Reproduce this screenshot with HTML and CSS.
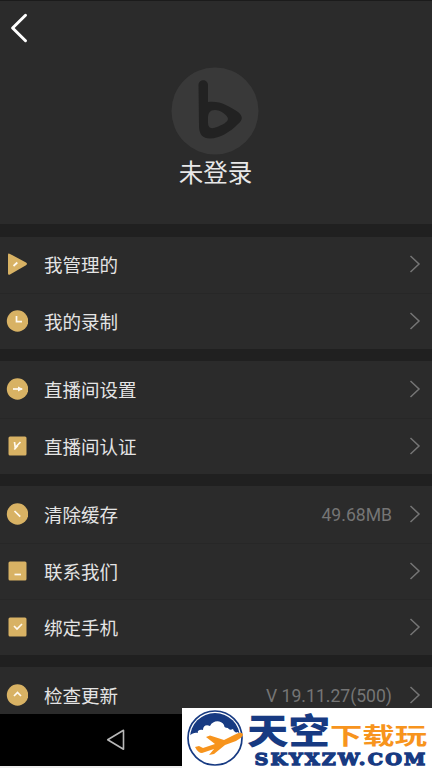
FILE: index.html
```html
<!DOCTYPE html>
<html lang="zh-CN">
<head>
<meta charset="utf-8">
<title>我的</title>
<link rel="stylesheet" href="styles.css">
</head>
<body>
<main class="screen">
  <header class="profile">
    <svg class="back" viewBox="0 0 18 30"><path d="M15.5 2.3 2.6 15 15.5 27.7"/></svg>
    <svg class="avatar" viewBox="0 0 88 88"><circle class="disc" cx="44" cy="44" r="43.5"/><path class="mark" fill-rule="evenodd" d="M27.500 18C27.500 11.500 37 11.500 37 18V35C49 33.500 58 39 67 45C72 49 72 53 67 57C59 65 49 71.500 39 71.500Q28 71.500 28 59ZM37 51V55C37 62 41 62 46 60C51 58 57 55 57 52C57 48 49 43 44 43C39 43 37 46 37 51Z"/></svg>
    <h1 class="name">未登录</h1>
  </header>
  <section class="group">
    <a class="row"><svg class="icon" viewBox="0 0 22 22"><path class="gold" d="M2 1.800Q2-.2 4 .9L20 9.400Q22 10.800 20 12.200L4 21.500Q2 22.400 2 20.400Z"/><path class="line" d="m7.500 13 3.800-3.500"/></svg><span class="label">我管理的</span><svg class="chevron" viewBox="0 0 12 20"><path d="m1.500 2 8.500 8-8.500 8"/></svg></a>
    <a class="row"><svg class="icon" viewBox="0 0 22 22"><circle class="gold" cx="11.500" cy="11" r="10.700"/><path class="line" d="M10.500 6v5.700H16"/></svg><span class="label">我的录制</span><svg class="chevron" viewBox="0 0 12 20"><path d="m1.500 2 8.500 8-8.500 8"/></svg></a>
  </section>
  <section class="group">
    <a class="row"><svg class="icon" viewBox="0 0 22 22"><circle class="gold" cx="11.500" cy="11" r="10.700"/><path class="line" d="M7 11h9"/><path class="fill" d="m12 8.500 5 2.500-5 2.500Z"/></svg><span class="label">直播间设置</span><svg class="chevron" viewBox="0 0 12 20"><path d="m1.500 2 8.500 8-8.500 8"/></svg></a>
    <a class="row"><svg class="icon" viewBox="0 0 22 22"><rect class="gold" x="2.500" y="1.500" width="18" height="19" rx="1.500"/><path class="line" d="m8.500 7 .7 5.500L14.500 7M8.300 14.500l3.500-4"/></svg><span class="label">直播间认证</span><svg class="chevron" viewBox="0 0 12 20"><path d="m1.500 2 8.500 8-8.500 8"/></svg></a>
  </section>
  <section class="group">
    <a class="row"><svg class="icon" viewBox="0 0 22 22"><circle class="gold" cx="11.500" cy="11" r="10.700"/><path class="line" d="m8.500 8 5.700 5.700"/></svg><span class="label">清除缓存</span><span class="value">49.68MB</span><svg class="chevron" viewBox="0 0 12 20"><path d="m1.500 2 8.500 8-8.500 8"/></svg></a>
    <a class="row"><svg class="icon" viewBox="0 0 22 22"><rect class="gold" x="2.500" y="1.500" width="18" height="19" rx="1.500"/><path class="line" d="M8.500 14.500H15"/></svg><span class="label">联系我们</span><svg class="chevron" viewBox="0 0 12 20"><path d="m1.500 2 8.500 8-8.500 8"/></svg></a>
    <a class="row"><svg class="icon" viewBox="0 0 22 22"><rect class="gold" x="2.500" y="1.500" width="18" height="19" rx="1.500"/><path class="line" d="m8 10 3 3 5-5"/></svg><span class="label">绑定手机</span><svg class="chevron" viewBox="0 0 12 20"><path d="m1.500 2 8.500 8-8.500 8"/></svg></a>
  </section>
  <section class="group last">
    <a class="row"><svg class="icon" viewBox="0 0 22 22"><circle class="gold" cx="11.500" cy="11" r="10.700"/><path class="line" d="m8 12 3.500-3.500L15 12"/></svg><span class="label">检查更新</span><span class="value">V 19.11.27(500)</span><svg class="chevron" viewBox="0 0 12 20"><path d="m1.500 2 8.500 8-8.500 8"/></svg></a>
  </section>
  <nav class="navbar"><svg class="nav-back" viewBox="0 0 20 22"><path d="M17.500 1.300v19L1.700 10.800Z"/></svg></nav>
</main>
<svg class="watermark" viewBox="0 0 250 60">
  <clipPath id="globe"><circle cx="33" cy="30" r="25"/></clipPath>
  <circle class="ring" cx="33" cy="30" r="27"/>
  <path class="navy" clip-path="url(#globe)" d="M5 0H61V27C58 27 57 26 56 24C54 25 52 24 51 21C49 22 47 22 46 20C43 20 42 19 42 17C39 12 31 12 28 18C24 16 21 18 21 22C17 21 15 23 16 25C12 24 9 26 6 29Z"/>
  <path class="orange" d="M13 39 17 38 21 40 33 36 24 29 28 27.500 42 32 52 27Q60 23 61 26.500Q61 29 54 33L43 37 32 46 27 47 32 41 20 45Q16 45 13 39Z"/>
  <text class="cn navy" x="65" y="35.500" font-size="35" textLength="83" lengthAdjust="spacingAndGlyphs">天空</text>
  <text class="cn orange thin" x="148" y="35.500" font-size="22.500" textLength="97" lengthAdjust="spacingAndGlyphs">下载玩</text>
  <text class="site" x="72.500" y="57" font-size="17.500" textLength="173" lengthAdjust="spacingAndGlyphs">SKYXZW.COM</text>
</svg>
</body>
</html>
```

FILE: styles.css
```css
* { box-sizing: border-box; }
body { margin: 0; background: #fff; font-family: Roboto, "Noto Sans CJK SC", sans-serif; }
.screen { width: 432px; height: 768px; display: flex; flex-direction: column; background: #202020; overflow: hidden; }
.profile { flex: none; height: 224px; margin-bottom: 12.700px; background: #2b2b2b; border-top: 1px solid #1b1b1b; display: grid; grid-template-rows: 66px 88px 38px; justify-items: center; }
.back { width: 18px; height: 30px; justify-self: start; margin: 12px 0 0 10px; }
.back path { fill: none; stroke: #fff; stroke-width: 3; stroke-linecap: round; stroke-linejoin: round; }
.avatar { width: 88px; height: 88px; margin-right: 2px; }
.disc { fill: #393939; }
.mark { fill: #222; }
.name { margin: 1px 1px 0 0; font-size: 24.500px; font-weight: 400; line-height: 36px; color: #e8e8e8; }
.group { flex: none; margin-bottom: 12.300px; background: #2b2b2b; }
.row { display: flex; align-items: center; height: 56.250px; padding: 0 11px 0 6px; }
.row + .row { border-top: 1px solid #272727; }
.icon { width: 22px; height: 22px; flex: none; margin-top: -1px; }
.gold { fill: #d8b264; }
.line { fill: none; stroke: #fffaf0; stroke-width: 1.700; }
.fill { fill: #fffaf0; }
.label { flex: 1; margin-left: 16px; padding-top: 3px; font-size: 18.500px; line-height: 28px; color: #e4e4e4; }
.value { margin-right: 17px; padding-top: 1px; font-size: 17.600px; color: #757575; }
.chevron { width: 12px; height: 20px; flex: none; margin-top: -1px; }
.chevron path { fill: none; stroke: #757575; stroke-width: 1.500; }
.last { height: 47px; margin: 0; overflow: hidden; }
.navbar { flex: 1; background: #000; border-bottom: 2px solid #eee; padding: 15px 0 0 106px; }
.nav-back { display: block; width: 20px; height: 22px; }
.nav-back path { fill: none; stroke: #b8b8b8; stroke-width: 1.600; stroke-linejoin: round; }
.watermark { position: absolute; left: 182px; top: 708px; width: 250px; height: 60px; background: #fff; }
.ring { fill: #fff; stroke: #173a82; stroke-width: 1.700; }
.navy { fill: #173a82; }
.orange { fill: #f7941d; }
.cn { font-family: "Noto Sans CJK SC", sans-serif; font-weight: 900; }
.thin { font-weight: 700; }
.site { font-family: "DejaVu Serif", serif; font-weight: 700; letter-spacing: 2px; fill: #173a82; stroke: #173a82; stroke-width: 1.300px; }
```
